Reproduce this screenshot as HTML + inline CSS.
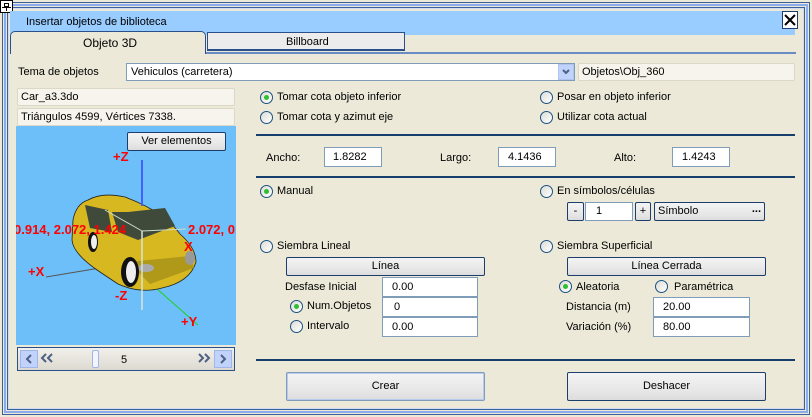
<!DOCTYPE html>
<html><head><meta charset="utf-8"><style>
*{box-sizing:border-box;margin:0;padding:0}
body{width:812px;height:417px;overflow:hidden;background:#ece9d8;font-family:"Liberation Sans",Tahoma,sans-serif;font-size:11px;color:#000;position:relative}
.a{position:absolute}
.t{position:absolute;white-space:nowrap;line-height:13px}
.box{position:absolute;background:#fff;border:1px solid #7f9db9;padding-left:8px;line-height:17px;font-size:11px}
.ro{position:absolute;background:#f6f4ec;border:1px solid #dcd8c8;border-radius:2px;padding-left:3px;line-height:16px}
.btn{position:absolute;background:linear-gradient(#f4f4f4,#e6e6e6 70%,#dcdcdc);border:1px solid #1c3e6c;border-radius:2px;text-align:center;font-size:11px}
.r{position:absolute;width:13px;height:13px;border-radius:50%;border:1px solid #1c5180;background:linear-gradient(135deg,#dcdcd6,#fff)}
.r.on::after{content:"";position:absolute;left:3px;top:3px;width:5px;height:5px;border-radius:50%;background:#2fbf2f}
.sep{position:absolute;height:2px;background:#153e6c}
</style></head><body>
<div class="a" style="left:0;top:0;width:812px;height:417px;background:#ece9d8"></div>
<div class="a" style="left:2px;top:2px;width:808px;height:413px;border:1px solid #3a5f9a"></div>
<div class="a" style="left:4px;top:4px;width:804px;height:409px;border:2px solid #8aacec"></div>
<div class="a" style="left:7px;top:7px;width:798px;height:403px;border:1px solid #3a5f9a"></div>
<div class="a" style="left:8px;top:8px;width:796px;height:401px;border:1px solid #d0dcf4"></div>
<div class="a" style="left:0;top:0;width:13px;height:13px;border:1px solid #000;background:#fff"><div class="a" style="left:3px;top:2px;width:5px;height:4px;border:1px solid #000"></div><div class="a" style="left:1px;top:6px;width:9px;height:1px;background:#000"></div><div class="a" style="left:5px;top:7px;width:1px;height:3px;background:#000"></div></div>
<div class="a" style="left:10px;top:11px;width:785px;height:24px;background:#99ccff"></div>
<div class="t" style="left:26px;top:16px;font-size:11px">Insertar objetos de biblioteca</div>
<div class="a" style="left:782px;top:11px;width:16px;height:18px;border:1px solid #1c3e6c;background:#fff">
<svg width="14" height="16"><path d="M2 3L12 13M12 3L2 13" stroke="#000" stroke-width="2"/></svg></div>
<div class="a" style="left:10px;top:52px;width:786px;height:2px;background:#6a8cc4"></div>
<div class="a" style="left:10px;top:31px;width:196px;height:23px;background:#ece9d8;border:1px solid #2a4f8a;border-bottom:none;border-radius:5px 5px 0 0"></div>
<div class="t" style="left:83px;top:37px;font-size:12px">Objeto 3D</div>
<div class="a" style="left:207px;top:32px;width:198px;height:19px;background:#ececec;border:1px solid #2a4f8a;border-bottom:2px solid #2a4f8a"></div>
<div class="t" style="left:286px;top:36px">Billboard</div>
<div class="t" style="left:18px;top:66px">Tema de objetos</div>
<div class="a" style="left:126px;top:63px;width:449px;height:18px;background:#fff;border:1px solid #7f9db9"></div>
<div class="t" style="left:131px;top:66px">Vehiculos (carretera)</div>
<div class="a" style="left:558px;top:64px;width:16px;height:16px;background:#c1d3fb;border:1px solid #b0c4f0"><svg width="14" height="14"><path d="M4 5L7 8L10 5" stroke="#4d6185" stroke-width="2" fill="none"/></svg></div>
<div class="ro" style="left:578px;top:63px;width:217px;height:18px">Objetos\Obj_360</div>
<div class="ro" style="left:17px;top:88px;width:218px;height:18px">Car_a3.3do</div>
<div class="ro" style="left:17px;top:108px;width:218px;height:18px">Triángulos 4599, Vértices 7338.</div>
<div class="a" style="left:16px;top:126px;width:220px;height:219px;background:#6cbff8;overflow:hidden">
<svg width="220" height="219" viewBox="16 126 220 219">
<line x1="46" y1="277" x2="100" y2="268" stroke="#555" stroke-width="1"/>
<line x1="156" y1="288" x2="198" y2="325" stroke="#1fd01f"/>
<path d="M88 200 Q76 204 73 220 L72 240 Q73 254 100 272 L118 284 Q140 294 162 288 Q190 282 196 262 Q196 248 180 234 Q165 212 125 197 Q102 192 88 200Z" fill="#d7b820" stroke="#222" stroke-width="0.8"/>
<path d="M85 205 L108 210 L112 232 L90 228Z M112 212 L128 212 L165 208 L175 226 L138 240 L118 232Z" fill="#3f4a3a"/>
<path d="M128 262 L190 256 L194 268 L150 284Z" fill="#b09818"/>
<ellipse cx="146" cy="268" rx="8" ry="4" fill="#aaa"/>
<ellipse cx="190" cy="258" rx="5" ry="7" fill="#999"/>
<ellipse cx="130" cy="272" rx="9" ry="15" fill="#111"/><ellipse cx="131" cy="272" rx="5" ry="11" fill="#eee"/>
<ellipse cx="93" cy="242" rx="5" ry="10" fill="#111"/><ellipse cx="94" cy="242" rx="3" ry="7" fill="#eee"/>
<line x1="142" y1="231" x2="186" y2="229" stroke="#ccddcc"/>
<line x1="105" y1="210" x2="142" y2="231" stroke="#ccddcc"/>
<line x1="142" y1="160" x2="142" y2="206" stroke="#4060ff" stroke-width="2"/>
<line x1="142" y1="231" x2="142" y2="310" stroke="#d8e4d8" stroke-width="1.5"/>
<g fill="#f00" font-family="Liberation Sans" font-weight="bold" font-size="13">
<text x="113" y="161">+Z</text>
<text x="14" y="234">0.914, 2.072, 1.424</text>
<text x="188" y="234">2.072, 0.00</text>
<text x="184" y="251">X</text>
<text x="28" y="276">+X</text>
<text x="115" y="300">-Z</text>
<text x="181" y="326">+Y</text>
</g>
</svg>
</div>
<div class="btn" style="left:127px;top:132px;width:99px;height:19px;line-height:17px">Ver elementos</div>
<div class="a" style="left:17px;top:347px;width:218px;height:24px;border:1px solid #2a4f8a;background:linear-gradient(#f2f0ea,#dcdad0)"></div>
<div class="a" style="left:20px;top:350px;width:18px;height:18px;background:#c1d3fb;border:1px solid #9fb6ea"><svg width="16" height="16"><path d="M10 4L6 8L10 12" stroke="#4d6185" stroke-width="2" fill="none"/></svg></div>
<div class="a" style="left:214px;top:350px;width:18px;height:18px;background:#c1d3fb;border:1px solid #9fb6ea"><svg width="16" height="16"><path d="M6 4L10 8L6 12" stroke="#4d6185" stroke-width="2" fill="none"/></svg></div>
<svg class="a" style="left:40px;top:352px" width="14" height="12"><path d="M6 2L2 6L6 10M12 2L8 6L12 10" stroke="#4d6185" stroke-width="2" fill="none"/></svg>
<svg class="a" style="left:197px;top:352px" width="14" height="12"><path d="M2 2L6 6L2 10M8 2L12 6L8 10" stroke="#4d6185" stroke-width="2" fill="none"/></svg>
<div class="a" style="left:92px;top:350px;width:7px;height:18px;background:#f4f4ff;border:1px solid #9fb6ea;border-radius:2px"></div>
<div class="t" style="left:121px;top:354px">5</div>
<div class="r on" style="left:260px;top:91px"></div><div class="t" style="left:277px;top:91px">Tomar cota objeto inferior</div>
<div class="r" style="left:260px;top:111px"></div><div class="t" style="left:277px;top:111px">Tomar cota y azimut eje</div>
<div class="r" style="left:540px;top:91px"></div><div class="t" style="left:557px;top:91px">Posar en objeto inferior</div>
<div class="r" style="left:540px;top:111px"></div><div class="t" style="left:557px;top:111px">Utilizar cota actual</div>
<div class="sep" style="left:256px;top:134px;width:539px"></div>
<div class="t" style="left:266px;top:152px">Ancho:</div><div class="box" style="left:324px;top:147px;width:58px;height:20px;line-height:18px">1.8282</div>
<div class="t" style="left:440px;top:152px">Largo:</div><div class="box" style="left:498px;top:147px;width:58px;height:20px;line-height:18px;padding-left:9px">4.1436</div>
<div class="t" style="left:614px;top:152px">Alto:</div><div class="box" style="left:672px;top:147px;width:58px;height:20px;line-height:18px;padding-left:9px">1.4243</div>
<div class="sep" style="left:256px;top:176px;width:539px"></div>
<div class="r on" style="left:260px;top:185px"></div><div class="t" style="left:277px;top:185px">Manual</div>
<div class="r" style="left:540px;top:185px"></div><div class="t" style="left:557px;top:185px">En símbolos/células</div>
<div class="btn" style="left:567px;top:202px;width:17px;height:19px;line-height:17px">-</div>
<div class="box" style="left:585px;top:202px;width:48px;height:19px;padding-left:10px">1</div>
<div class="btn" style="left:635px;top:202px;width:16px;height:19px;line-height:17px">+</div>
<div class="btn" style="left:654px;top:202px;width:111px;height:19px;line-height:17px;text-align:left;padding-left:3px">Símbolo<span style="position:absolute;right:3px;top:-2px;font-weight:bold">...</span></div>
<div class="r" style="left:260px;top:240px"></div><div class="t" style="left:277px;top:240px">Siembra Lineal</div>
<div class="r" style="left:540px;top:240px"></div><div class="t" style="left:557px;top:240px">Siembra Superficial</div>
<div class="btn" style="left:286px;top:257px;width:199px;height:19px;line-height:17px">Línea</div>
<div class="btn" style="left:567px;top:257px;width:199px;height:19px;line-height:17px">Línea Cerrada</div>
<div class="t" style="left:285px;top:281px">Desfase Inicial</div><div class="box" style="left:382px;top:277px;width:96px;height:20px;line-height:18px;padding-left:9px">0.00</div>
<div class="r on" style="left:290px;top:300px"></div><div class="t" style="left:307px;top:300px">Num.Objetos</div><div class="box" style="left:382px;top:297px;width:96px;height:20px;line-height:18px;padding-left:11px">0</div>
<div class="r" style="left:290px;top:320px"></div><div class="t" style="left:307px;top:320px">Intervalo</div><div class="box" style="left:382px;top:317px;width:96px;height:20px;line-height:18px;padding-left:9px">0.00</div>
<div class="r on" style="left:559px;top:280px"></div><div class="t" style="left:576px;top:281px">Aleatoria</div>
<div class="r" style="left:655px;top:280px"></div><div class="t" style="left:674px;top:281px">Paramétrica</div>
<div class="t" style="left:566px;top:301px">Distancia (m)</div><div class="box" style="left:653px;top:297px;width:97px;height:20px;line-height:18px;padding-left:9px">20.00</div>
<div class="t" style="left:566px;top:321px">Variación (%)</div><div class="box" style="left:653px;top:317px;width:97px;height:20px;line-height:18px;padding-left:9px">80.00</div>
<div class="sep" style="left:256px;top:359px;width:539px"></div>
<div class="btn" style="left:286px;top:372px;width:199px;height:29px;line-height:27px;border-color:#7f9db9;box-shadow:inset 0 0 0 1px #b8cbee">Crear</div>
<div class="btn" style="left:567px;top:372px;width:199px;height:29px;line-height:27px">Deshacer</div>
</body></html>
